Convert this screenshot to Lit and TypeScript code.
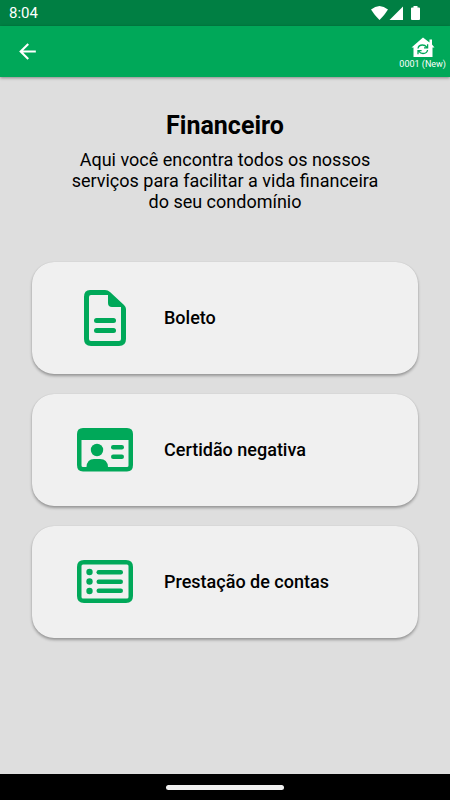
import { LitElement, html, css, svg } from "lit";
import { customElement, property } from "lit/decorators.js";

type IconName = "document" | "idCard" | "list";

const icons = {
  document: svg`
    <path fill-rule="evenodd" d="M13 0H28Q31 0 33 2L47 15Q49 17 49 19V49Q49 56 42 56H14Q7 56 7 49V7Q7 0 13 0ZM31 5H14Q12 5 12 7V49Q12 51 14 51H42Q44 51 44 49V17H35Q31 17 31 13Z"/>
    <rect x="17" y="28" width="22" height="5" rx="2.5"/>
    <rect x="17" y="38" width="22" height="5" rx="2.5"/>`,
  idCard: svg`
    <path fill-rule="evenodd" d="M6 6H50Q56 6 56 12V43Q56 49.500 50 49.500H6Q0 49.500 0 43V12Q0 6 6 6ZM4.500 18V43.500Q4.500 45 6 45H9.500Q10 37 17 37H23Q30.500 37 31 45H50Q51.500 45 51.500 43.500V18Z"/>
    <circle cx="20" cy="28" r="6.200"/>
    <rect x="34" y="23" width="13" height="4.500" rx="2.200"/>
    <rect x="34" y="32.500" width="13" height="4.500" rx="2.200"/>`,
  list: svg`
    <path fill-rule="evenodd" d="M7 6H49Q56 6 56 13V42Q56 49 49 49H7Q0 49 0 42V13Q0 6 7 6ZM6 10.500Q4.500 10.500 4.500 12V43Q4.500 44.500 6 44.500H50Q51.500 44.500 51.500 43V12Q51.500 10.500 50 10.500Z"/>
    <circle cx="12.500" cy="18" r="3.200"/>
    <circle cx="12.500" cy="27.500" r="3.200"/>
    <circle cx="12.500" cy="37" r="3.200"/>
    <rect x="19.500" y="16" width="26.500" height="4.500" rx="2.200"/>
    <rect x="19.500" y="25.500" width="26.500" height="4.500" rx="2.200"/>
    <rect x="19.500" y="34.500" width="26.500" height="4.500" rx="2.200"/>`,
};

@customElement("menu-card")
export class MenuCard extends LitElement {
  @property() label = "";
  @property() icon: IconName = "document";

  static styles = css`
    :host {
      display: block;
    }
    .card {
      display: flex;
      align-items: center;
      gap: 31px;
      width: 100%;
      min-height: 112px;
      padding: 16px 45px;
      border: 0;
      border-radius: 22px;
      background: #f0f0f0;
      box-shadow: 0 2px 3px rgba(0, 0, 0, 0.32), 0 0 1px rgba(0, 0, 0, 0.15);
      color: #000;
      font: 500 18px/24px Roboto, sans-serif;
      text-align: left;
      box-sizing: border-box;
      cursor: pointer;
    }
    .icon {
      flex: none;
      width: 56px;
      height: 56px;
      fill: #00a859;
    }
  `;

  render() {
    return html`<button class="card" type="button">
      <svg class="icon" viewBox="0 0 56 56" aria-hidden="true">${icons[this.icon]}</svg>
      <span>${this.label}</span>
    </button>`;
  }
}

@customElement("app-root")
export class AppRoot extends LitElement {
  static styles = css`
    :host {
      display: flex;
      flex-direction: column;
      min-height: 100vh;
      background: #dedede;
      color: #000;
      font-family: Roboto, sans-serif;
    }
    .status {
      display: flex;
      align-items: center;
      justify-content: space-between;
      height: 26px;
      padding: 0 28px 0 9px;
      background: #007f43;
      color: #fff;
      font-size: 15px;
      line-height: 26px;
    }
    .status-icons {
      width: 52px;
      height: 16px;
      fill: #fff;
    }
    .bar {
      display: flex;
      align-items: center;
      justify-content: space-between;
      height: 51px;
      padding: 0 4px 0 15px;
      background: #00a859;
      box-shadow: 0 1px 3px rgba(0, 0, 0, 0.4);
    }
    .back,
    .unit {
      padding: 0;
      border: 0;
      background: none;
      color: #fff;
      cursor: pointer;
    }
    .back {
      display: flex;
    }
    .unit {
      display: flex;
      flex-direction: column;
      align-items: center;
      gap: 2px;
      padding-top: 3px;
      font: 9px/10px Roboto, sans-serif;
    }
    .house {
      width: 24px;
      height: 20px;
    }
    main {
      flex: 1;
      padding: 33px 32px 40px;
    }
    h1 {
      margin: 0;
      font-size: 25px;
      line-height: 32px;
      font-weight: 700;
      text-align: center;
    }
    .intro {
      max-width: 320px;
      margin: 7px auto 50px;
      font-size: 18px;
      line-height: 21px;
      text-align: center;
    }
    .cards {
      display: flex;
      flex-direction: column;
      gap: 20px;
    }
    .nav {
      display: flex;
      align-items: center;
      justify-content: center;
      height: 26px;
      background: #000;
    }
    .handle {
      width: 118px;
      height: 5px;
      border-radius: 3px;
      background: #f0f0f0;
    }
  `;

  render() {
    return html`
      <div class="status">
        <span>8:04</span>
        <svg class="status-icons" viewBox="0 0 52 16" aria-hidden="true">
          <path d="M1 4.500Q9.500 -2.500 18 4.500Q14 11 9.500 15Q5 11 1 4.500Z" />
          <path d="M19.500 15L33 1.500V15Z" />
          <path d="M42 2.500H43.500V1H47.500V2.500H49Q50 2.500 50 3.500V14Q50 15 49 15H42Q41 15 41 14V3.500Q41 2.500 42 2.500Z" />
        </svg>
      </div>
      <header class="bar">
        <button class="back" type="button" aria-label="Voltar">
          <svg width="25" height="25" viewBox="0 0 24 24" fill="#fff" aria-hidden="true">
            <path d="M20 11H7.830l5.590-5.590L12 4l-8 8 8 8 1.410-1.410L7.830 13H20v-2z" />
          </svg>
        </button>
        <button class="unit" type="button">
          <svg class="house" viewBox="0 0 24 20" aria-hidden="true">
            <path fill="#fff" d="M12 .5L18.500 5.500V2.500H21V7.500L23.500 10.500H21.500V20H2.500V10.500H.5Z" />
            <g fill="none" stroke="#00a859" stroke-width="1.300">
              <path d="M7 11.500Q7.500 8 11.500 8Q14 8 15.800 10.200M16.600 7.200V10.800H13" />
              <path d="M16.600 13Q16 16.500 12 16.500Q9.500 16.500 7.800 14.300M7 17.300V13.700H10.600" />
            </g>
          </svg>
          <span>0001 (New)</span>
        </button>
      </header>
      <main>
        <h1>Financeiro</h1>
        <p class="intro">Aqui você encontra todos os nossos serviços para facilitar a vida financeira do seu condomínio</p>
        <div class="cards">
          <menu-card icon="document" label="Boleto"></menu-card>
          <menu-card icon="idCard" label="Certidão negativa"></menu-card>
          <menu-card icon="list" label="Prestação de contas"></menu-card>
        </div>
      </main>
      <div class="nav"><div class="handle"></div></div>
    `;
  }
}
